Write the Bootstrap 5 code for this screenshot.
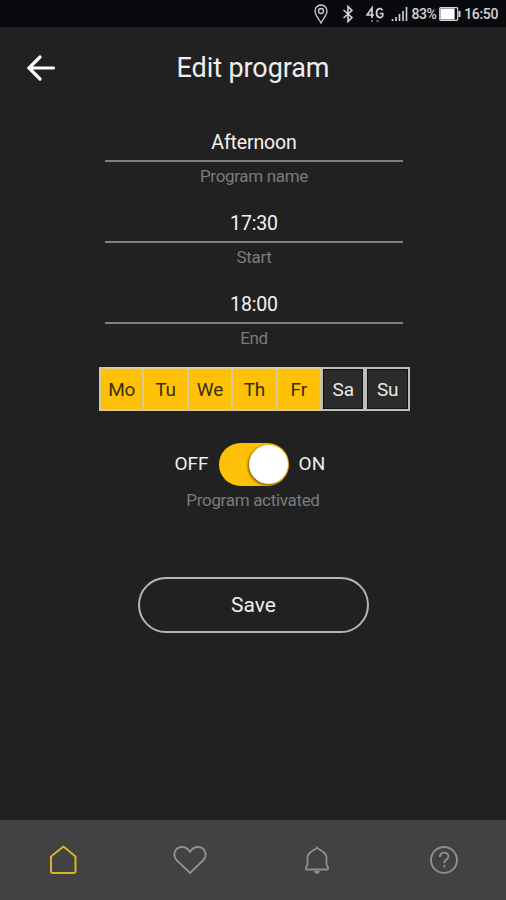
<!DOCTYPE html>
<html lang="en">
<head>
<meta charset="utf-8">
<meta name="viewport" content="width=device-width, initial-scale=1">
<title>Edit program</title>
<link href="https://cdn.jsdelivr.net/npm/bootstrap@5.3.0/dist/css/bootstrap.min.css" rel="stylesheet">
<style>
body{background:#212121;color:#eee;font-family:Roboto,"Liberation Sans",sans-serif;height:900px;overflow:hidden}
svg{display:block;fill:none;stroke:currentColor;flex:none}
.status{height:27px;background:#080a0e;color:#d4d4d4;font-size:14px;line-height:27px;padding:1px 8px 0 0}
.gap-bt{margin-left:13px}.gap-net{margin-left:12px}.gap-sig{margin-left:7px}.gap-sm{margin-left:3px}
.pct{letter-spacing:-.5px}.clock{letter-spacing:-.35px}
.topbar{display:grid;grid-template-columns:82px 1fr 82px;height:82px}
.topbar h1{font-size:27px;font-weight:400;line-height:1;padding-top:1px;letter-spacing:-.1px}
.fields{width:298px;margin:15px 0 0 105px}
.field{height:81px}
.field input{height:38px;border:0;border-bottom:2px solid #7f7f7f;color:#f2f2f2;font-size:19.5px;font-weight:400;letter-spacing:-.15px;background:none}
.field .text-center{padding:1px 0 0}
.caption{font-size:17px;line-height:28px;letter-spacing:-.32px;color:#7b7b7b}
.days{width:311px;height:44px;margin-left:99px}
.day{flex:none;width:45px;padding:1px 0 0;border:2px solid #bdbdbd;border-radius:0;background:#2b2b2b;color:#e8e8e8;font-size:19px;letter-spacing:-.2px;line-height:40px;font-weight:400}
.day.on{width:44.4px;background:#ffc107;color:#38300f;border-color:#d9cb94;border-left-width:1px;border-right-width:1px}
.day.on:first-child{border-left-width:2px}
.day:not(.on){width:44.5px;box-shadow:inset 0 0 0 1px #111}
.toggle-line{height:43px;margin:32px 0 0 174.500px;font-size:19px;gap:10px}
.switch-track{width:70px;height:43px;border-radius:22px;background:#ffc107;padding:2px 1px}
.knob{width:39px;height:39px;border-radius:50%;background:#fff;box-shadow:-1px 1px 3px #6b5000}
.save{width:231px;height:56px;margin:63px 0 0 138px;border:2px solid #b5b5b5;border-radius:28px;color:#eee;font-size:21px;line-height:1}
.tabs{height:80px;background:#424242;color:#8e8e8e}
.tabs svg{margin:0 auto}
.tabs .shift{padding-left:2px}
.current{color:#dcb02a}
</style>
</head>
<body class="d-flex flex-column">
<div class="status d-flex align-items-center justify-content-end">
  <svg width="16" height="22" viewBox="0 0 16 22" stroke-width="1.3"><path d="M8 20C6 16 2 12 2 8a6 6 0 0 1 12 0c0 4-4 8-6 12z"/><circle cx="8" cy="8" r="2.5"/></svg>
  <svg class="gap-bt" width="12" height="18" viewBox="0 0 12 18" stroke-width="1.6"><path d="M1.500 5 10 12.500 6 16.500V1.500L10 5.500 1.500 13"/></svg>
  <svg class="gap-net" width="18" height="20" viewBox="0 0 18 20" stroke-width="1.7"><path d="M6 14V4L1 11h7M16.500 6.500C15.500 3.500 10.500 3.800 10.500 9s5 5.500 6.200 3V9.500h-3"/><path stroke-width="1" d="M5 17h2M10.500 17h2"/></svg>
  <svg class="gap-sig" width="17" height="16" viewBox="0 0 17 16" stroke-width="1.6"><path d="M1.500 15v-2M5 15v-4M8.500 15V8M12 15V5M15.500 15V1"/></svg>
  <span class="gap-sm pct fw-medium">83%</span>
  <svg class="gap-sm" width="22" height="14" viewBox="0 0 22 14" stroke-width="1.2"><rect x=".7" y=".7" width="18" height="12.600" rx="1"/><path d="M20.500 4v6" stroke-width="2"/><path d="M2 2h13v10H2z" fill="#fff" stroke="#fff"/></svg>
  <span class="gap-sm clock fw-medium">16:50</span>
</div>
<header class="topbar align-items-center">
  <button class="btn p-0 text-white border-0" aria-label="Back"><svg class="mx-auto" width="30" height="28" viewBox="0 0 30 28" stroke-width="3.200" stroke-linecap="round"><path d="M27.500 14H4M14 3 3 14l11 11"/></svg></button>
  <h1 class="mb-0 text-center">Edit program</h1>
</header>
<main class="flex-grow-1">
  <form class="m-0">
    <div class="fields text-center">
      <div class="field"><input id="name" class="d-block w-100 text-center" value="Afternoon"><label for="name" class="caption d-block">Program name</label></div>
      <div class="field"><input id="start" class="d-block w-100 text-center" value="17:30"><label for="start" class="caption d-block">Start</label></div>
      <div class="field"><input id="end" class="d-block w-100 text-center" value="18:00"><label for="end" class="caption d-block">End</label></div>
    </div>
    <div class="days d-flex">
      <button type="button" class="btn day on">Mo</button><button type="button" class="btn day on">Tu</button><button type="button" class="btn day on">We</button><button type="button" class="btn day on">Th</button><button type="button" class="btn day on">Fr</button><button type="button" class="btn day">Sa</button><button type="button" class="btn day">Su</button>
    </div>
    <div class="toggle-line d-flex align-items-center"><span>OFF</span><div class="switch-track d-flex justify-content-end" role="switch" aria-checked="true"><div class="knob"></div></div><span>ON</span></div>
    <div class="caption text-center">Program activated</div>
    <button type="button" class="btn save d-block p-0">Save</button>
  </form>
</main>
<nav class="tabs row g-0 align-items-center">
  <div class="col current"><svg width="30" height="30" viewBox="0 0 30 30" stroke-width="2" stroke-linejoin="round"><path d="M15.500 1.500 27.500 11.500V26q0 2-2 2H5q-2 0-2-2V11.500z"/></svg></div>
  <div class="col shift"><svg width="34" height="30" viewBox="0 0 34 30" stroke-width="1.900" stroke-linejoin="round"><path d="M17 28 3.500 15C-1 9.500 2.500 2 9 2c4 0 6.500 2.500 8 5 1.500-2.500 4-5 8-5 6.500 0 10 7.500 5.500 13z"/></svg></div>
  <div class="col shift"><svg width="28" height="30" viewBox="0 0 28 30" stroke-width="1.800" stroke-linejoin="round"><path d="M14 1.500v2M3 24.500h22c1.300-2-1.500-3-1.500-6V13c0-5-4.500-7-9.500-10C9 6 4.500 8 4.500 13v5.500c0 3-2.800 4-1.500 6z"/><path d="M11 26c.5 3.500 5.500 3.500 6 0z" fill="currentColor" stroke="none"/></svg></div>
  <div class="col shift"><svg width="30" height="30" viewBox="0 0 30 30" stroke-width="1.900"><circle cx="15" cy="15" r="13"/><path d="M11 12c0-6 8.500-5.500 8.500-.8 0 3.300-4.200 3.300-4.200 7M15.300 20v2.500"/></svg></div>
</nav>
<script src="https://cdn.jsdelivr.net/npm/bootstrap@5.3.0/dist/js/bootstrap.bundle.min.js"></script>
</body>
</html>
